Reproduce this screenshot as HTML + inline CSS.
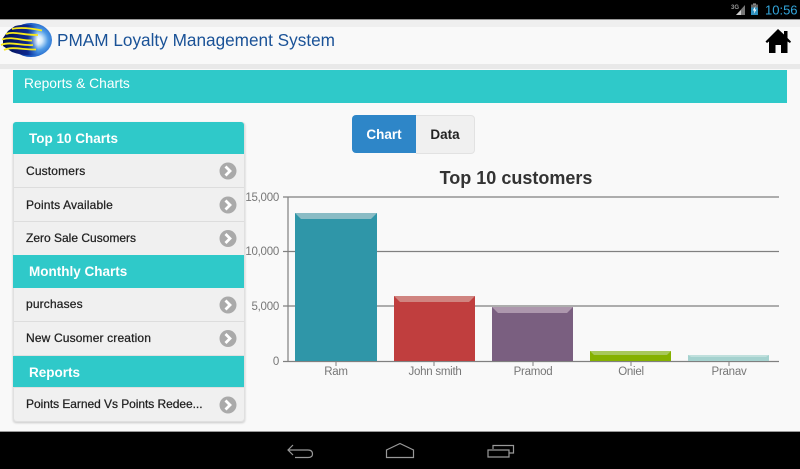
<!DOCTYPE html>
<html><head><meta charset="utf-8">
<style>
html,body{margin:0;padding:0;width:800px;height:469px;overflow:hidden;background:#f9f9f9;font-family:"Liberation Sans",sans-serif}
div,span{position:absolute;white-space:nowrap}
.hd{left:13px;width:231px;background:#2fc9c9;color:#fff;font-weight:bold;font-size:13.500px;line-height:33px;height:32px}
.hd span{left:16px;top:0}
.it{left:14px;width:230px;background:#f0f0f0;color:#222;font-size:12px;border-bottom:1px solid #ddd;-webkit-text-stroke:.25px #222}
.it span{left:12px;letter-spacing:.15px}
.yl{color:#777;font-size:11.500px;letter-spacing:-.25px;text-align:right;width:40px;left:239px;line-height:12px}
.xl{color:#777;font-size:11.500px;letter-spacing:-.25px;text-align:center;width:90px;line-height:12px;top:366px}
</style></head>
<body>
<div style="left:0;top:0;width:800px;height:19px;background:#000"></div>
<div style="left:0;top:19px;width:800px;height:1px;background:#999"></div>
<div style="left:0;top:20px;width:800px;height:7px;background:#efefef"></div>
<div style="left:0;top:64px;width:800px;height:5px;background:#e9e9e9"></div>
<div style="left:0;top:431px;width:800px;height:1px;background:#999"></div>
<div style="left:0;top:432px;width:800px;height:37px;background:#000"></div>

<svg style="position:absolute;left:0;top:0" width="800" height="469">
<defs>
<radialGradient id="g" gradientUnits="userSpaceOnUse" cx="38" cy="40" r="24"><stop offset="0" stop-color="#fff"/><stop offset=".18" stop-color="#d5ebfb"/><stop offset=".42" stop-color="#4f9be6"/><stop offset=".75" stop-color="#1a5cc6"/><stop offset="1" stop-color="#0c3599"/></radialGradient>
<linearGradient id="f" gradientUnits="userSpaceOnUse" x1="4" x2="38" y1="0" y2="0"><stop offset="0" stop-color="#030f50"/><stop offset=".7" stop-color="#0b2a90"/><stop offset="1" stop-color="#1a4ab8" stop-opacity="0"/></linearGradient>
<filter id="b" x="-10%" y="-10%" width="120%" height="120%"><feGaussianBlur stdDeviation=".35"/></filter>
</defs>
<!-- status bar -->
<text x="731" y="9" font-size="6" font-weight="bold" fill="#999" font-family="Liberation Sans">3G</text>
<path d="M736 15L745 5V15Z" fill="#777"/><path d="M736 15L741 10V15Z" fill="#ccc"/>
<rect x="751" y="5" width="7" height="10" fill="#2d8fbd"/><rect x="753" y="3.500" width="3" height="2" fill="#aaa"/>
<rect x="751" y="4.500" width="7" height="3" fill="#666"/>
<path d="M755.500 6L752.800 10.500H754.500L753.800 14L756.500 9.500H754.800Z" fill="#fff"/>
<text x="765" y="14.500" font-size="13" fill="#33a6dc" font-family="Liberation Sans">10:56</text>
<!-- logo -->
<g filter="url(#b)">
<ellipse cx="31" cy="40" rx="21" ry="17" fill="url(#g)"/>
<path d="M15 26C24 24 32 24 40 27L38 55C30 56 20 55 12 52L3 46 3 38 8 31Z" fill="url(#f)"/>
<path d="M12 29C20 27 30 28 42 30.500M6 34C14 31 22 35 38 35M2 39.500C12 36 22 41 32 40.500M1 45C10 41 22 46 33 45M4 50C12 46 24 50 36 49.500" stroke="#f7e81a" stroke-width="1.800" fill="none"/>
</g>
<!-- home -->
<path d="M778 29L765.500 41.500L767 43L769 41.500V53H775.500V45H781V53H787.500V41.500L790 43L791 41.500L787.500 38V31H784V34.500Z" fill="#000"/>
<!-- nav -->
<g stroke="#999" stroke-width="1.200" fill="none">
<path d="M293 445L288 450L293 455M288 450H308Q312.500 450 312.500 454 312.500 457.500 308 457.500H295"/>
<path d="M386.500 450V457.500H413.500V450L400 443.500Z"/>
<path d="M488 450H509V457H488ZM493 449V445.500H513.500V453H509"/>
</g>
<!-- chart -->
<g stroke="#808080" stroke-width="1.200">
<path d="M288 197H779M283 251.500H779M283 306H779M283 197H288M283 361.500H779M288 197V361.500"/>
<path d="M336 361.500V366M434 361.500V366M533 361.500V366M631 361.500V366M729 361.500V366" stroke-width="1"/>
</g>
<rect x="295" y="213" width="82" height="148" fill="#2f96a8"/>
<path d="M295 213H377L371 219H301Z" fill="#8abcc5"/>
<rect x="394" y="296" width="81" height="65" fill="#c03e3e"/>
<path d="M394 296H475L469 302H400Z" fill="#d08480"/>
<rect x="492" y="307" width="81" height="54" fill="#7a5f80"/>
<path d="M492 307H573L567 313H498Z" fill="#ad97ad"/>
<rect x="590" y="351" width="81" height="10" fill="#85b100"/>
<path d="M590 351H671L667 355H594Z" fill="#a8c85a"/>
<rect x="688" y="355" width="81" height="6" fill="#a5d2cf"/>
<path d="M688 355H769L766 357H691Z" fill="#c0e0dd"/>
</svg>

<div style="left:57px;top:30px;font-size:17.200px;line-height:20px;color:#1a5297">PMAM Loyalty Management System</div>

<div style="left:13px;top:70px;width:774px;height:33px;background:#2fc9c9"></div>
<div style="left:24px;top:75px;font-size:13.800px;line-height:17px;color:#fff">Reports &amp; Charts</div>

<div style="left:13px;top:122px;width:232px;height:300px;background:#e0e0e0;border-radius:3px;box-shadow:0 1px 2px rgba(0,0,0,.2)"></div>
<div class="hd" style="top:122px;border-radius:3px 3px 0 0"><span>Top 10 Charts</span></div>
<div class="it" style="top:154px;height:33px;line-height:34px"><span>Customers</span></div>
<div class="it" style="top:188px;height:33px;line-height:34px"><span>Points Available</span></div>
<div class="it" style="top:222px;height:33px;line-height:33px;border:0"><span style="letter-spacing:0">Zero Sale Cusomers</span></div>
<div class="hd" style="top:255px;height:33px;line-height:34px"><span>Monthly Charts</span></div>
<div class="it" style="top:288px;height:33px;line-height:33px"><span>purchases</span></div>
<div class="it" style="top:322px;height:33px;line-height:33px;border:0"><span>New Cusomer creation</span></div>
<div class="hd" style="top:356px;height:31px;line-height:33px"><span>Reports</span></div>
<div class="it" style="top:388px;height:33px;line-height:33px;border:0;border-radius:0 0 3px 3px"><span style="letter-spacing:-.05px">Points Earned Vs Points Redee...</span></div>

<svg style="position:absolute;left:0;top:0" width="800" height="469">
<circle cx="228" cy="171" r="8.500" fill="#aaa"/><path d="M225.500 166.500L230 171L225.500 175.500" stroke="#fff" stroke-width="2.800" fill="none"/>
<circle cx="228" cy="205" r="8.500" fill="#aaa"/><path d="M225.500 200.500L230 205L225.500 209.500" stroke="#fff" stroke-width="2.800" fill="none"/>
<circle cx="228" cy="238.500" r="8.500" fill="#aaa"/><path d="M225.500 234L230 238.500L225.500 243" stroke="#fff" stroke-width="2.800" fill="none"/>
<circle cx="228" cy="305" r="8.500" fill="#aaa"/><path d="M225.500 300.500L230 305L225.500 309.500" stroke="#fff" stroke-width="2.800" fill="none"/>
<circle cx="228" cy="338.500" r="8.500" fill="#aaa"/><path d="M225.500 334L230 338.500L225.500 343" stroke="#fff" stroke-width="2.800" fill="none"/>
<circle cx="228" cy="405" r="8.500" fill="#aaa"/><path d="M225.500 400.500L230 405L225.500 409.500" stroke="#fff" stroke-width="2.800" fill="none"/>
</svg>

<div style="left:352px;top:115px;width:64px;height:38px;background:#2e86c8;border-radius:4px 0 0 4px;color:#fff;font-weight:bold;font-size:13.500px;line-height:39px;text-align:center">Chart</div>
<div style="left:416px;top:115px;width:58px;height:37px;background:#f0f0f0;border:1px solid #e2e2e2;border-left:0;border-radius:0 4px 4px 0;color:#222;font-weight:bold;font-size:13.500px;line-height:38px;text-align:center">Data</div>

<div style="left:416px;top:167px;width:200px;text-align:center;font-size:18px;line-height:22px;font-weight:bold;color:#333">Top 10 customers</div>

<div class="yl" style="top:192px">15,000</div>
<div class="yl" style="top:246px">10,000</div>
<div class="yl" style="top:301px">5,000</div>
<div class="yl" style="top:356px">0</div>
<div class="xl" style="left:291px">Ram</div>
<div class="xl" style="left:390px">John smith</div>
<div class="xl" style="left:488px">Pramod</div>
<div class="xl" style="left:586px">Oniel</div>
<div class="xl" style="left:684px">Pranav</div>
</body></html>
